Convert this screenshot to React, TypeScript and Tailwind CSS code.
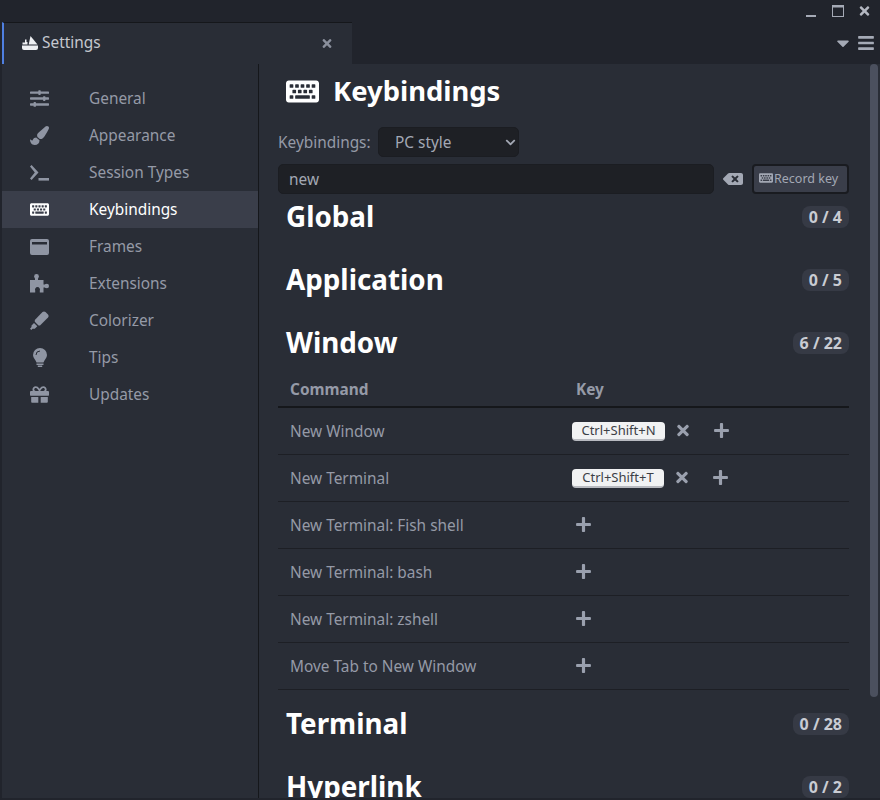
import React from "react";
import { FaSlidersH, FaPaintBrush, FaKeyboard, FaGift, FaBackspace, FaTimes, FaPlus, FaBars, FaCaretDown, FaChevronDown } from "react-icons/fa";

const font = { fontFamily: '"Noto Sans", sans-serif' };

function Prompt({ className }: { className?: string }) {
  return (
    <svg viewBox="0 0 19 16" className={className} fill="currentColor">
      <path d="M0 1.500 1.600 0 8.500 7.400 1.600 15 0 13.400 4.800 7.400Z" />
      <rect x="8.500" y="13" width="10.500" height="2.600" />
    </svg>
  );
}

function FrameIcon({ className }: { className?: string }) {
  return (
    <svg viewBox="0 0 19 16" className={className} fill="currentColor">
      <path fillRule="evenodd" d="M2 0h15a2 2 0 0 1 2 2v12a2 2 0 0 1-2 2H2a2 2 0 0 1-2-2V2a2 2 0 0 1 2-2ZM2 3v2.500h15V3Z" />
    </svg>
  );
}

function KnifeIcon({ className }: { className?: string }) {
  return (
    <svg viewBox="0 0 16 14" className={className} fill="currentColor">
      <path d="M8.500 0 15.500 8.500H6.700Z" />
      <path d="M3 3.500H4.500V6H5.500V8.500H0.500V6.500H3Z" />
      <path d="M0 9.500H16V12a2 2 0 0 1-2 2H2a2 2 0 0 1-2-2Z" />
    </svg>
  );
}

function PuzzleIcon({ className }: { className?: string }) {
  return (
    <svg viewBox="0 0 19 19" className={className} fill="currentColor">
      <circle cx="6.500" cy="2.500" r="2.400" />
      <circle cx="16.800" cy="12" r="2.200" />
      <path d="M0 6H5V4H8V6H13.500V10.500H16V13.500H13.500V18.500H9.800V16.500A2.500 2.500 0 1 0 5.200 16.500V18.500H0Z" />
    </svg>
  );
}

function MarkerIcon({ className }: { className?: string }) {
  return (
    <svg viewBox="0 0 19 19" className={className} fill="currentColor">
      <path d="M12.500 1Q14-.2 15.500 1L18 3.500Q19.200 5 18 6.500L10 14.500H8.500L4.800 10.800V9Z" />
      <path d="M4 12 7.300 15.300 4.800 17.800H2.500L1.300 19 0 17.700 1.500 16V14.500Z" />
    </svg>
  );
}

function BulbIcon({ className }: { className?: string }) {
  return (
    <svg viewBox="0 0 14 19" className={className} fill="currentColor">
      <path d="M7 0A7 7 0 0 1 14 7C14 10 11.500 11.500 10.500 14.500H3.500C2.500 11.500 0 10 0 7A7 7 0 0 1 7 0Z" />
      <path d="M3.500 15.500H10.500V17H3.500Z" />
      <path d="M4.800 17.500H9.200V19H4.800Z" />
      <path d="M3 7A4 4 0 0 1 7 3" fill="none" stroke="#292d36" strokeWidth="1" />
    </svg>
  );
}

function MaxIcon({ className }: { className?: string }) {
  return (
    <svg viewBox="0 0 12 12" className={className} fill="currentColor">
      <path fillRule="evenodd" d="M0 0H12V12H0ZM1 2.500V11H11V2.500Z" />
    </svg>
  );
}

const nav: { label: string; icon: React.ReactNode; active?: boolean }[] = [
  { label: "General", icon: <FaSlidersH className="w-[19px] h-[19px]" /> },
  { label: "Appearance", icon: <FaPaintBrush className="w-[19px] h-[19px]" /> },
  { label: "Session Types", icon: <Prompt className="w-[19px] h-[16px]" /> },
  { label: "Keybindings", icon: <FaKeyboard className="w-[19px] h-[19px]" />, active: true },
  { label: "Frames", icon: <FrameIcon className="w-[19px] h-[16px]" /> },
  { label: "Extensions", icon: <PuzzleIcon className="w-[19px] h-[19px]" /> },
  { label: "Colorizer", icon: <MarkerIcon className="w-[19px] h-[19px]" /> },
  { label: "Tips", icon: <BulbIcon className="w-[14px] h-[19px]" /> },
  { label: "Updates", icon: <FaGift className="w-[19px] h-[19px]" /> },
];

function Section({ title, count, className }: { title: string; count: string; className?: string }) {
  return (
    <div className={`flex items-center justify-between h-[46px] ${className ?? ""}`}>
      <h2 className="pl-2 text-[27.800px] font-bold text-white leading-none">{title}</h2>
      <span className="h-[22px] px-[7px] flex items-center rounded-lg bg-[#363a45] text-[#c9ccd3] text-[16px] font-bold leading-none">{count}</span>
    </div>
  );
}

function Row({ label, keyName, keyWidth }: { label: string; keyName?: string; keyWidth?: string }) {
  return (
    <div className="flex items-center h-[47px] border-b border-[#1d1f25]">
      <div className="w-[294px] pl-3 pt-[2px] text-[#959aa7] text-[15.400px]">{label}</div>
      <div className="flex items-center mb-[1px]">
        {keyName ? (
          <>
            <span className={`h-[19px] mt-[1px] flex items-center justify-center rounded-[4px] bg-[#f1f2f3] border-b-2 border-[#b8bac0] text-[#3c3f46] text-[13px] leading-none ${keyWidth}`}>{keyName}</span>
            <FaTimes className="ml-[11px] w-[14px] h-[17px] text-[#9aa0ae]" />
            <FaPlus className="ml-[23px] w-[17px] h-[17px] text-[#9aa0ae]" />
          </>
        ) : (
          <FaPlus className="ml-[3px] w-[17px] h-[17px] text-[#9aa0ae]" />
        )}
      </div>
    </div>
  );
}

export default function App() {
  return (
    <div style={font} className="w-[880px] h-[800px] overflow-hidden flex flex-col bg-[#21242c] text-[#959aa7]">
      <div className="h-[22px] flex items-center justify-end pr-[10px] text-[#a5aab6] shrink-0">
        <div className="w-[10px] h-[2px] mt-[9px] bg-[#a5aab6]" />
        <MaxIcon className="ml-[16px] w-[12px] h-[12px]" />
        <FaTimes className="ml-[15px] w-[11px] h-[14px] text-[#b3b7c1]" />
      </div>
      <div className="h-[42px] flex shrink-0 items-stretch">
        <div className="ml-[2px] w-[350px] flex items-center bg-[#292d36] border-t border-[#15171b] border-l-2 border-l-[#4f7fe0] pl-[18px] pr-[20px]">
          <KnifeIcon className="w-[16px] h-[14px] text-[#eef0f3] mb-[2px]" />
          <span className="ml-[4px] mb-[1px] text-[#c5c8cf] text-[15.400px]">Settings</span>
          <FaTimes className="ml-auto w-[10px] h-[13px] text-[#8a8f9c]" />
        </div>
        <div className="ml-auto flex items-center pr-[5px] text-[#a5aab6]">
          <FaCaretDown className="w-[20px] h-[20px]" />
          <FaBars className="ml-[4px] w-[18px] h-[18px]" />
        </div>
      </div>
      <div className="flex-1 flex min-h-0 pl-[2px] pb-[2px]">
        <nav className="w-[257px] shrink-0 bg-[#292d36] border-r border-[#15171b] pt-[16px]">
          {nav.map((n) => (
            <div key={n.label} className={`h-[37px] flex items-center ${n.active ? "bg-[#3a3e4a] text-white" : "text-[#959aa7]"}`}>
              <div className={`ml-[28px] w-[19px] flex justify-center ${n.active ? "text-white" : "text-[#8f95a3]"}`}>{n.icon}</div>
              <span className="ml-[40px] text-[15.400px]">{n.label}</span>
            </div>
          ))}
        </nav>
        <main className="flex-1 min-w-0 bg-[#292d36] flex overflow-hidden">
          <div className="w-[590px] shrink-0 ml-[19px] overflow-hidden">
            <div className="h-[63px] pb-[9px] pl-[8px] flex items-center">
              <FaKeyboard className="w-[33px] h-[33px] text-white" />
              <h1 className="ml-[14px] text-[27.400px] font-bold text-white leading-none">Keybindings</h1>
            </div>
            <div className="flex items-center h-[30px] w-[571px]">
              <span className="w-[100px] pt-[2px] text-[15.400px] text-[#959aa7]">Keybindings:</span>
              <div className="w-[141px] h-[30px] flex items-center justify-between rounded-[5px] bg-[#1e2025] border border-[#1b1d22] pl-[16px] pr-[2px]">
                <span className="pt-[1px] text-[15.400px] text-[#a3a8b4]">PC style</span>
                <FaChevronDown className="w-[11px] h-[11px] text-[#a3a8b4]" />
              </div>
            </div>
            <div className="mt-[7px] flex items-center h-[30px] w-[571px]">
              <div className="w-[436px] h-[30px] flex items-center rounded-[5px] bg-[#1e2025] border border-[#1b1d22] pl-[10px]">
                <span className="pt-[2px] text-[15.400px] text-[#a3a8b4]">new</span>
              </div>
              <FaBackspace className="ml-[9px] w-[20px] h-[16px] text-[#a3a8b4]" />
              <div className="ml-[9px] w-[97px] h-[30px] flex items-center pl-[5px] rounded-[4px] border-2 border-[#191b20] bg-[#3a3e4a] text-[#a3a8b4] text-[12.500px]">
                <FaKeyboard className="w-[14px] h-[14px] mr-[1px] mb-[2px]" />
                Record key
              </div>
            </div>
            <div className="w-[571px]">
              <Section title="Global" count="0 / 4" className="mb-[17px]" />
              <Section title="Application" count="0 / 5" className="mb-[17px]" />
              <Section title="Window" count="6 / 22" />
              <div className="flex items-end h-[42px] pb-[5px] border-b-2 border-[#15171b] text-[#959aa7] font-bold text-[15.400px]">
                <span className="w-[298px] pl-3">Command</span>
                <span>Key</span>
              </div>
              <Row label="New Window" keyName="Ctrl+Shift+N" keyWidth="w-[93px]" />
              <Row label="New Terminal" keyName="Ctrl+Shift+T" keyWidth="w-[92px]" />
              <Row label="New Terminal: Fish shell" />
              <Row label="New Terminal: bash" />
              <Row label="New Terminal: zshell" />
              <Row label="Move Tab to New Window" />
              <Section title="Terminal" count="0 / 28" className="mt-[11px] mb-[17px]" />
              <Section title="Hyperlink" count="0 / 2" />
            </div>
          </div>
          <div className="ml-auto mr-[2px] w-[8px] h-[633px] rounded bg-[#4b505e]" />
        </main>
      </div>
    </div>
  );
}
